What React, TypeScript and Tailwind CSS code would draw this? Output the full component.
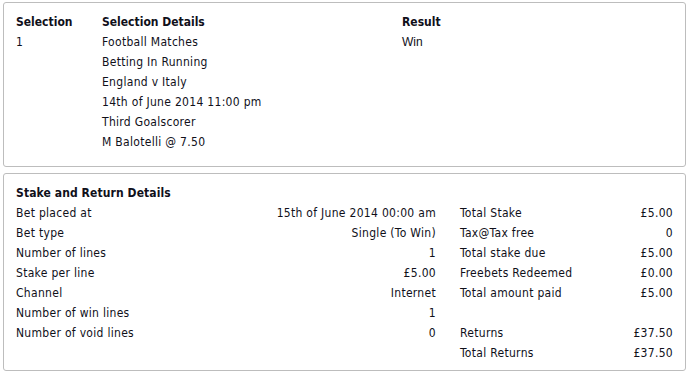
const details = [
  "Football Matches",
  "Betting In Running",
  "England v Italy",
  "14th of June 2014 11:00 pm",
  "Third Goalscorer",
  "M Balotelli @ 7.50",
];

const betRows: [string, string][] = [
  ["Bet placed at", "15th of June 2014 00:00 am"],
  ["Bet type", "Single (To Win)"],
  ["Number of lines", "1"],
  ["Stake per line", "£5.00"],
  ["Channel", "Internet"],
  ["Number of win lines", "1"],
  ["Number of void lines", "0"],
];

const totals: [string, string][] = [
  ["Total Stake", "£5.00"],
  ["Tax@Tax free", "0"],
  ["Total stake due", "£5.00"],
  ["Freebets Redeemed", "£0.00"],
  ["Total amount paid", "£5.00"],
  ["", ""],
  ["Returns", "£37.50"],
  ["Total Returns", "£37.50"],
];

const App = () => {
  return (
    <div
      className="bg-white w-[696px] h-[377px] pt-[2px] pl-[3px] text-[12px] leading-[20px] text-[#10101a] tracking-[0.3px]"
      style={{ fontFamily: '"DejaVu Sans Condensed", Tahoma, sans-serif' }}
    >
      <div className="w-[683px] h-[165px] border border-[#bdbdbd] rounded-[3px] pt-[9px] px-[12px]">
        <div className="flex">
          <div className="w-[86px]">
            <div className="font-bold tracking-normal">Selection</div>
            <div>1</div>
          </div>
          <div className="w-[300px]">
            <div className="font-bold tracking-normal">Selection Details</div>
            {details.map((d) => (
              <div key={d}>{d}</div>
            ))}
          </div>
          <div>
            <div className="font-bold tracking-normal">Result</div>
            <div className="tracking-normal" style={{ fontFamily: '"Liberation Sans", Arial, sans-serif' }}>
              Win
            </div>
          </div>
        </div>
      </div>

      <div className="w-[683px] h-[198px] mt-[6px] border border-[#bdbdbd] rounded-[3px] pt-[9px] px-[12px]">
        <div className="font-bold tracking-[0.1px]">Stake and Return Details</div>
        <div className="flex gap-[24px]">
          <div className="w-[420px]">
            {betRows.map(([l, v]) => (
              <div key={l} className="flex justify-between h-[20px]">
                <span>{l}</span>
                <span>{v}</span>
              </div>
            ))}
          </div>
          <div className="flex-1">
            {totals.map(([l, v], i) => (
              <div key={i} className="flex justify-between h-[20px]">
                <span>{l}</span>
                <span>{v}</span>
              </div>
            ))}
          </div>
        </div>
      </div>
    </div>
  );
};

export default App;
